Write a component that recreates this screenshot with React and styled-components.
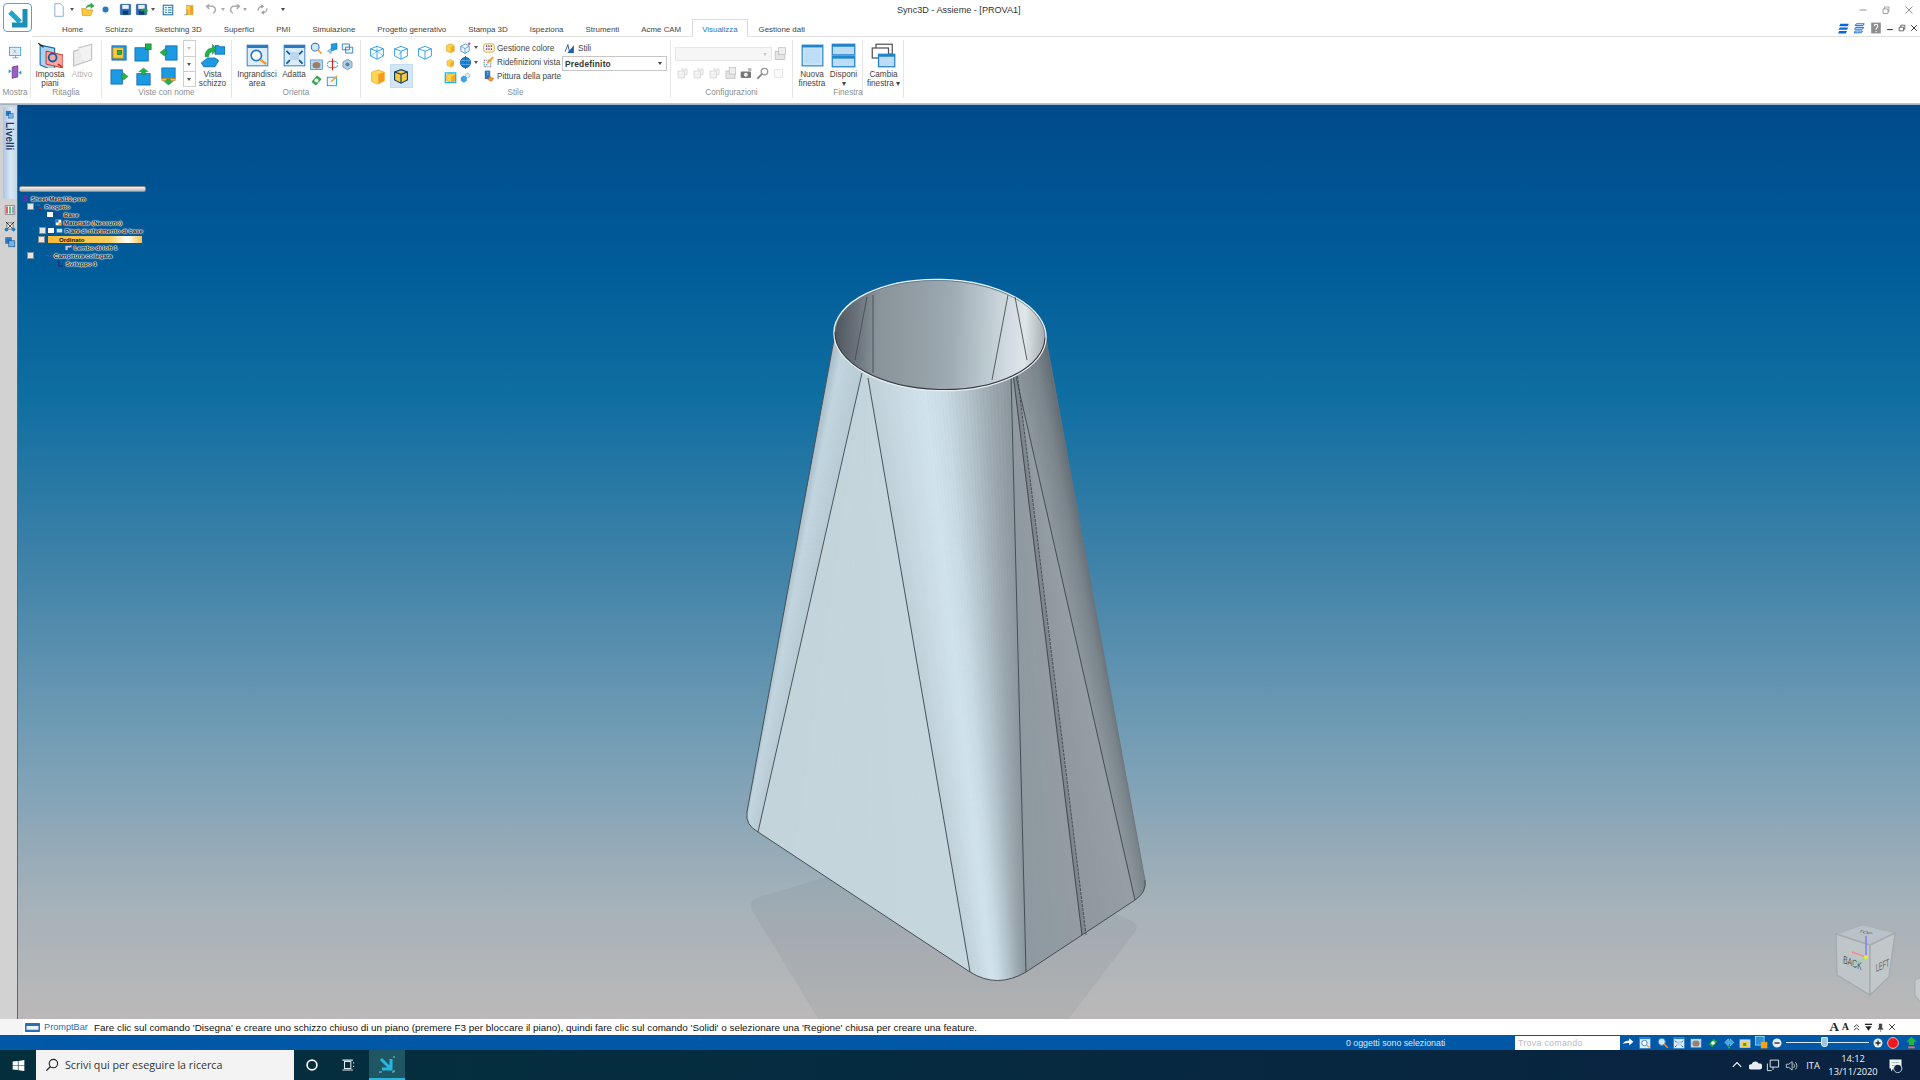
import React from "react";
import styled, { createGlobalStyle } from "styled-components";

const Global = createGlobalStyle`
  html, body { margin: 0; padding: 0; background: #fff; }
  body { font-family: "Liberation Sans", Arial, sans-serif; overflow: hidden; }
`;

const Page = styled.div`
  width: 1920px;
  height: 1080px;
  display: flex;
  flex-direction: column;
  overflow: hidden;
`;

const Header = styled.header`
  flex: none;
  background: #fff;
  height: 103px;
  display: flex;
  flex-direction: column;
`;
const TopRows = styled.div`
  display: flex;
  height: 37px;
  flex: none;
`;
const LogoBox = styled.div`
  width: 27px;
  height: 27px;
  margin: 3px 0 0 3px;
  border: 1px solid #4fa6d2;
  border-radius: 4px;
  flex: none;
`;
const TopStack = styled.div`
  flex: 1;
  display: flex;
  flex-direction: column;
  min-width: 0;
`;
const TitleRow = styled.div`
  height: 19px;
  flex: none;
  display: flex;
  align-items: center;
  padding-left: 20px;
`;
const Slot = styled.div`
  width: ${(p) => p.$w}px;
  height: 16px;
  flex: none;
  display: flex;
  align-items: center;
  justify-content: center;
`;
const Caret = styled.span`
  display: block;
  width: 0;
  height: 0;
  border-left: 2px solid transparent;
  border-right: 2px solid transparent;
  border-top: 3px solid ${(p) => p.$c || "#555"};
`;
const Title = styled.div`
  margin-left: 608px;
  font-size: 9.1px;
  color: #333;
  white-space: nowrap;
`;
const WinControls = styled.div`
  margin-left: auto;
  display: flex;
  align-items: center;
  gap: 13px;
  padding-right: 6px;
`;
const TabRow = styled.nav`
  height: 18px;
  flex: none;
  box-sizing: border-box;
  display: flex;
  align-items: stretch;
  padding-left: 19px;
  border-bottom: 1px solid #e1e1e1;
`;
const Tab = styled.div`
  padding: 0 ${(p) => p.$pad || 11}px;
  font-size: 7.9px;
  line-height: 21px;
  white-space: nowrap;
  color: ${(p) => (p.$active ? "#1f74b8" : "#444")};
  ${(p) =>
    p.$active &&
    `box-sizing:border-box;background:#fff;border:1px solid #dcdcdc;border-bottom:1px solid #fff;height:18px;line-height:20px;`}
`;
const TabTools = styled.div`
  margin-left: auto;
  display: flex;
  align-items: center;
  gap: 4px;
  padding-right: 2px;
`;

const Ribbon = styled.div`
  flex: none;
  height: 58px;
  display: flex;
  padding-top: 3px;
`;
const Group = styled.section`
  flex: none;
  box-sizing: border-box;
  width: ${(p) => p.$w}px;
  height: 58px;
  display: flex;
  flex-direction: column;
  border-right: 1px solid #e6e6e6;
`;
const GroupBody = styled.div`
  flex: none;
  height: 46px;
  display: flex;
  padding-left: ${(p) => p.$pl || 0}px;
`;
const GroupLabel = styled.div`
  flex: none;
  height: 12px;
  line-height: 14px;
  font-size: 8.2px;
  text-align: center;
  color: #8a8f94;
  white-space: nowrap;
`;
const IconStack = styled.div`
  width: 100%;
  display: flex;
  flex-direction: column;
  align-items: center;
  gap: 5px;
  padding-top: 5px;
`;
const BigButton = styled.div`
  flex: none;
  width: ${(p) => p.$w}px;
  margin-left: ${(p) => p.$ml || 0}px;
  display: flex;
  flex-direction: column;
  align-items: center;
`;
const BigIcon = styled.div`
  height: 30px;
  flex: none;
  display: flex;
  align-items: center;
  justify-content: center;
`;
const BigText = styled.div`
  font-size: 8.2px;
  line-height: 9px;
  text-align: center;
  white-space: nowrap;
  color: ${(p) => (p.$off ? "#b4b4b4" : "#444")};
`;
const IconGrid = styled.div`
  flex: none;
  display: grid;
  grid-template-columns: ${(p) => p.$cols};
  grid-auto-rows: ${(p) => p.$row}px;
  margin-left: ${(p) => p.$ml || 0}px;
  justify-items: center;
  align-items: center;
`;
const Picked = styled.div`
  width: 23px;
  height: 24px;
  background: #d3e6f6;
  border: 1px solid #c3dcf2;
  box-sizing: border-box;
  display: flex;
  align-items: center;
  justify-content: center;
`;
const Spinner = styled.div`
  flex: none;
  width: 13px;
  margin: 0 0 0 2px;
  height: 47px;
  border: 1px solid #cfcfcf;
  box-sizing: border-box;
  display: grid;
  grid-template-rows: 1fr 1fr 1fr;
`;
const SpinCell = styled.div`
  display: flex;
  align-items: center;
  justify-content: center;
  border-top: ${(p) => (p.$first ? "none" : "1px solid #cfcfcf")};
`;
const CmdList = styled.div`
  flex: none;
  width: 79px;
  margin-left: 3px;
  padding-top: 1px;
  display: flex;
  flex-direction: column;
`;
const Cmd = styled.div`
  height: 14px;
  flex: none;
  display: flex;
  align-items: center;
  gap: 2px;
  font-size: 8.2px;
  color: #444;
  white-space: nowrap;
`;
const StyleCol = styled.div`
  flex: none;
  width: 105px;
  padding-top: 1px;
  display: flex;
  flex-direction: column;
  gap: 1px;
`;
const Combo = styled.div`
  box-sizing: border-box;
  width: ${(p) => p.$w}px;
  height: ${(p) => p.$h}px;
  background: ${(p) => (p.$off ? "#f6f6f6" : "#fff")};
  border: 1px solid ${(p) => (p.$off ? "#e8e8e8" : "#c6c6c6")};
  display: flex;
  align-items: center;
  justify-content: space-between;
  padding: 0 4px 0 2px;
  font-size: 8.4px;
  font-weight: bold;
  color: #333;
  letter-spacing: 0.2px;
`;
const ConfigCol = styled.div`
  display: flex;
  flex-direction: column;
  padding: 7px 0 0 4px;
`;
const ConfigTop = styled.div`
  display: flex;
  align-items: center;
  gap: 1px;
`;
const ConfigIcons = styled.div`
  display: flex;
  gap: 3px;
  margin: 6px 0 0 1px;
`;
const SubSep = styled.div`
  flex: none;
  width: 1px;
  height: 56px;
  background: #e6e6e6;
  margin: 0 0 0 6px;
`;
const HeaderEdge = styled.div`
  flex: none;
  height: 2px;
  background: linear-gradient(180deg, #c8ced4, #93a9bf);
`;

const Main = styled.main`
  flex: 1;
  display: flex;
  min-height: 0;
`;
const Rail = styled.aside`
  flex: none;
  width: 18px;
  background: #d2d2d2;
  border-right: 1px solid #5c6870;
  box-sizing: border-box;
  display: flex;
  flex-direction: column;
  align-items: center;
  padding: 2px 0 0 2px;
`;
const RailTab = styled.div`
  width: 14px;
  flex: none;
  height: 92px;
  border-radius: 2px;
  background: linear-gradient(90deg, #a9c4e4, #dbe7f5 55%, #c2d6ec);
  display: flex;
  flex-direction: column;
  align-items: center;
  gap: 3px;
  padding-top: 3px;
  box-sizing: border-box;
`;
const RailText = styled.span`
  writing-mode: vertical-rl;
  font-size: 10px;
  font-weight: bold;
  color: #1d3f6e;
`;
const RailIcons = styled.div`
  display: flex;
  flex-direction: column;
  gap: 4px;
  margin-top: 5px;
`;
const Viewport = styled.div`
  position: relative;
  flex: 1;
  overflow: hidden;
  background: linear-gradient(
    180deg,
    #004a8b 0%,
    #005c99 17%,
    #0f6ea1 32%,
    #3f82a8 50%,
    #7aa0b6 72%,
    #a5b1b9 87%,
    #bbb9b8 100%
  );
`;
const Scene = styled.svg`
  position: absolute;
  left: 0;
  top: 0;
`;
const TreePanel = styled.div`
  position: absolute;
  left: 1px;
  top: 81px;
  width: 127px;
`;
const TreeGrip = styled.div`
  height: 4px;
  border-radius: 2px;
  background: linear-gradient(180deg, #f4f4f4, #b8b8b8);
  border: 0.5px solid #8b8b8b;
  margin-bottom: 2px;
`;
const TreeRow = styled.div`
  height: 8.2px;
  display: flex;
  align-items: center;
  gap: 2px;
  padding-left: ${(p) => p.$in}px;
  font-size: 6.1px;
  font-weight: bold;
  color: #111;
  white-space: nowrap;
  text-shadow: 0 0 1px #fff, 0 0 1px #fff, 0 0 1px #fff, 0 0 2px #fff, 0 0 2px #fff;
`;
const Expander = styled.span`
  flex: none;
  width: 5px;
  height: 5px;
  background: #e6e6e6;
  border: 0.5px solid #8d8d8d;
`;
const TreeCheck = styled.span`
  flex: none;
  width: 6px;
  height: 5px;
  background: ${(p) => (p.$blank ? "transparent" : "#fff")};
`;
const Highlight = styled.span`
  flex: none;
  width: 94px;
  height: 7px;
  margin-left: 1px;
  padding-left: 11px;
  box-sizing: border-box;
  line-height: 7px;
  color: #111;
  text-shadow: none;
  background: linear-gradient(90deg, #f6b93a, #fbcf5e 65%, #fff 85%, #f6c14a);
`;

const PromptRow = styled.div`
  flex: none;
  height: 16px;
  display: flex;
  align-items: center;
  background: #fff;
`;
const PromptGrip = styled.div`
  width: 23px;
  height: 100%;
  background: #f5f5f5;
  flex: none;
`;
const PromptName = styled.div`
  display: flex;
  align-items: center;
  gap: 4px;
  margin-left: 2px;
  font-size: 9.2px;
  color: #2a6fb2;
  width: 69px;
  flex: none;
`;
const PromptText = styled.div`
  font-size: 9.9px;
  color: #111;
  white-space: nowrap;
`;
const PromptTools = styled.div`
  margin-left: auto;
  display: flex;
  align-items: center;
  gap: 3px;
  padding-right: 24px;
`;
const BigA = styled.span`
  font-family: "Liberation Serif", serif;
  font-weight: bold;
  font-size: ${(p) => p.$s}px;
  line-height: 12px;
  color: #222;
`;

const StatusBar = styled.div`
  flex: none;
  height: 15px;
  background: #0058a6;
  display: flex;
  align-items: center;
  color: #dce9f5;
  font-size: 8.8px;
`;
const StatusText = styled.div`
  margin-left: 1346px;
  width: 169px;
  flex: none;
`;
const FindBox = styled.div`
  flex: none;
  width: 105px;
  height: 14px;
  background: #fff;
  color: #b7bcc1;
  font-size: 8.8px;
  line-height: 14px;
  padding-left: 3px;
  box-sizing: border-box;
  letter-spacing: 0.3px;
`;
const StatusIcons = styled.div`
  display: flex;
  align-items: center;
`;
const ZoomSlider = styled.div`
  position: relative;
  width: 83px;
  height: 1px;
  margin: 0 3px;
  background: #dbe7f2;
`;
const ZoomThumb = styled.span`
  position: absolute;
  left: 35px;
  top: -5px;
  width: 7px;
  height: 10px;
  background: #9fc3e3;
  border: 1px solid #dfeaf4;
  box-sizing: border-box;
  border-radius: 1px 1px 3px 3px;
`;

const Taskbar = styled.footer`
  flex: none;
  height: 30px;
  display: flex;
  align-items: stretch;
  background: linear-gradient(90deg, #032f3c, #052c40 40%, #0a2240);
  color: #f0f4f6;
`;
const StartButton = styled.div`
  width: 36px;
  flex: none;
  display: flex;
  align-items: center;
  justify-content: center;
`;
const SearchBox = styled.div`
  flex: none;
  width: 258px;
  background: #f3f3f3;
  color: #333;
  display: flex;
  align-items: center;
  gap: 6px;
  padding-left: 9px;
  box-sizing: border-box;
  font-family: "Open Sans", sans-serif;
  font-size: 10.7px;
`;
const TaskSlot = styled.div`
  flex: none;
  width: ${(p) => p.$w}px;
  margin-left: ${(p) => p.$ml || 0}px;
  display: flex;
  align-items: center;
  justify-content: center;
  box-sizing: border-box;
  ${(p) => p.$active && `background:#1f5663;border-bottom:2px solid #2fb4dc;`}
`;
const Tray = styled.div`
  margin-left: auto;
  display: flex;
  align-items: center;
  padding-right: 10px;
  font-family: "Open Sans", sans-serif;
`;
const TrayText = styled.div`
  font-size: 9.3px;
  width: ${(p) => p.$w}px;
  text-align: center;
  line-height: 13px;
`;

/* ---- icons, all drawn in a 20x20 box ---- */
const B = "#1c9ae4";
const BD = "#0c62a8";
const Y = "#ffc93c";
const O = "#f39b1f";
const G = "#23b24a";
const box = (x, y, w, h, f = B, s = BD) => <rect x={x} y={y} width={w} height={h} fill={f} stroke={s} strokeWidth=".8" />;
const arrow = (d, c = G) => <path d={d} fill={c} stroke="#127a30" strokeWidth=".4" />;
const cube = (f = "#ffd24a", s = "#c98a10") => (
  <>
    <path d="M4 6l7-3 6 3v9l-6 3-7-3z" fill={f} stroke={s} strokeWidth=".8" />
    <path d="M11 9v9l6-3V6z" fill={O} opacity=".75" />
  </>
);
const wire = (extra) => (
  <g fill="none" stroke={B} strokeWidth="1.1">
    <path d="M2 6l8-3 8 3v9l-8 4-8-4z" />
    <path d="M2 6l8 3 8-3M10 9v10" />
    {extra}
  </g>
);
const flop = (
  <>
    <rect x="2" y="2" width="16" height="16" rx="1" fill="#2f6db4" stroke="#17477f" strokeWidth=".8" />
    <rect x="5" y="3" width="10" height="6" fill="#e8f0f8" />
    <rect x="6" y="12" width="8" height="6" fill="#0f3b70" />
  </>
);
const greyArrow = (d) => <path d={d} fill="none" stroke="#a9adb1" strokeWidth="2.4" />;
const frame = (inner) => (
  <>
    <rect x="1" y="1" width="18" height="18" fill="#dcecf9" stroke="#2a78c0" strokeWidth=".8" />
    <rect x="1" y="1" width="18" height="2.5" fill="#2a78c0" />
    {inner}
  </>
);
const offPage = <path d="M3 6h10v11H3zM8 3h9v9h-4" fill="#f1f1f1" stroke="#cfcfcf" strokeWidth="1" />;

const GLYPHS = {
  doc: <path d="M4 1h8l4 4v14H4z" fill="#fff" stroke="#5a8ec6" />,
  open: (
    <>
      <path d="M1 8h6l2 2h8l-3 8H2z" fill={Y} stroke="#b9851a" strokeWidth=".8" />
      {arrow("M7 7c1-4 4-5 7-5V0l5 4-5 4V5c-3 0-5 1-7 2z")}
    </>
  ),
  ball: <><circle cx="11" cy="9" r="6" fill="#2a78c0" /><path d="M3 15l8 2 6-2-6 3z" fill="#bcd" /></>,
  save: flop,
  saveAll: <>{flop}{arrow("M9 13a5 5 0 019-2h2l-3 5-4-5h2a3 3 0 00-4 2z")}</>,
  list: <><rect x="2" y="2" width="16" height="16" fill="#dff" stroke="#1b5d92" strokeWidth="1.6" /><path d="M5 6h3M10 6h6M5 10h3M10 10h6M5 14h3M10 14h6" stroke="#1b5d92" strokeWidth="1.4" /></>,
  books: <><rect x="6" y="2" width="6" height="16" fill={Y} stroke="#b9851a" strokeWidth=".6" /><rect x="12" y="2" width="5" height="16" fill={O} /><path d="M2 18h5V9" stroke="#777" fill="none" /></>,
  undo: greyArrow("M14 16a6 6 0 000-11H5M8 2L4 5l4 4"),
  redo: greyArrow("M6 16a6 6 0 010-11h9M12 2l4 3-4 4"),
  swap: <path d="M3 12c0-5 4-7 8-7M8 3l3 2-3 3M17 8c0 5-4 7-8 7M12 17l-3-2 3-3" fill="none" stroke="#9a9ea3" strokeWidth="1.8" />,
  help: <><rect x="2" y="1" width="16" height="18" fill="#8d8d8d" /><path d="M7 7c0-4 6-4 6 0 0 3-3 2-3 6M10 15v2" stroke="#fff" strokeWidth="1.8" fill="none" /></>,
  stackA: <path d="M4 3h14l-2 4H2zM3 9h14l-2 4H1zM2 15h13l-2 4H0z" fill="#0b66d8" />,
  stackB: <path d="M4 3h13l-2 3H2zM3 9h13l-2 3H1zM2 15h12l-2 3H0z" fill="#fff" stroke="#0b66d8" strokeWidth="1.6" />,
  min: <path d="M3 10h14" stroke="#777" strokeWidth="1.6" />,
  restore: <path d="M4 8h10v9H4zM7 8V4h9v9h-2" fill="none" stroke="#777" strokeWidth="1.3" />,
  close: <path d="M3 3l14 14M17 3L3 17" stroke="#666" strokeWidth="1.4" />,
  minD: <path d="M3 14h14" stroke="#222" strokeWidth="2.4" />,
  restoreD: <path d="M3 8h11v9H3zM7 8V3h10v10h-3" fill="none" stroke="#222" strokeWidth="1.6" />,
  closeD: <path d="M3 3l14 14M17 3L3 17" stroke="#222" strokeWidth="2.2" />,
  screen: <><rect x="2" y="3" width="15" height="11" fill="#dcecf9" stroke={B} /><path d="M6 17h8M10 14v3" stroke={B} /><path d="M7 6l4 5M11 6l-4 5" stroke="#9aa" /></>,
  clip: <><path d="M6 3l8-2v16l-8 2z" fill="#9b5fc0" stroke="#5a2f88" /><path d="M1 6l4 3-4 3zM19 8l-4 3 4 3z" fill={B} /></>,
  planes: (
    <>
      <path d="M3 3l14 3v22L3 22z" fill="#a9d4ef" stroke={BD} transform="scale(.8)" />
      <path d="M7 7l13 3v10L7 17z" fill="#f6a7a0" stroke="#c8281e" strokeWidth=".7" />
      <path d="M1 1l4 3" stroke="#222" strokeWidth="1" />
      <path d="M19 19l-3-2" stroke="#c8281e" strokeWidth="1.2" />
      <circle cx="12" cy="12" r="3" fill="none" stroke="#0b5fa5" strokeWidth="1.4" />
    </>
  ),
  planesOff: <><path d="M3 7l9-3v12l-9 3z" fill="#ececec" stroke="#c3c3c3" /><path d="M7 4l11-3v13l-6 2" fill="#f3f3f3" stroke="#c3c3c3" /></>,
  vYellow: <>{box(2, 3, 15, 15)}{box(3, 5, 11, 11, Y, "#b9851a")}{box(8, 8, 4, 4, G, "#127a30")}</>,
  vCorner: <>{box(1, 5, 14, 14)}{box(12, 1, 6, 6, G, "#127a30")}</>,
  vLeft: <>{box(7, 3, 12, 15)}{arrow("M1 10l5-4v2h2v4H6v2z")}</>,
  vRight: <>{box(1, 3, 12, 15)}{arrow("M19 10l-5-4v2h-2v4h2v2z")}</>,
  vTop: <>{box(3, 7, 14, 12)}{arrow("M10 1l-5 4h3v3h4V5h3z")}</>,
  vBottom: <>{box(3, 1, 14, 11)}{box(3, 12, 14, 2, Y, "#b9851a")}{arrow("M10 19l-5-4h3v-2h4v2h3z")}</>,
  vista: (
    <>
      <path d="M1 16l5-4h6l3 2-3 5H3z" fill={B} stroke={BD} strokeWidth=".6" />
      <path d="M12 2h3l1 1h4v6h-8z" fill={B} stroke={BD} strokeWidth=".6" />
      {arrow("M4 11c0-4 2-7 6-7V1l3 4-3 4V7c-2 0-3 2-3 4z")}
    </>
  ),
  zoomArea: frame(<><circle cx="9" cy="10" r="4.5" fill="#fff" stroke="#2a78c0" strokeWidth="1.4" /><path d="M12.5 13.5l5 4" stroke={O} strokeWidth="2" /></>),
  fit: frame(<><rect x="6" y="7" width="8" height="7" fill="#bcd8f0" /><path d="M3 6l3 3M17 6l-3 3M3 17l3-3M17 17l-3-3" stroke="#0c62a8" strokeWidth="1.6" /></>),
  zoomS: <><circle cx="8" cy="8" r="6" fill="#cfe6f8" stroke="#2a78c0" strokeWidth="1.6" /><path d="M12 12l6 6" stroke={O} strokeWidth="2.4" /></>,
  panCube: <><path d="M8 3l9-1v9l-9 3z" fill={B} stroke={BD} strokeWidth=".7" /><path d="M2 14l6-4v8z" fill="#9ad0f2" stroke={BD} strokeWidth=".5" /></>,
  windows: <path d="M2 3h11v9H2zM7 8h11v9H7z" fill="#eef6fc" stroke="#1b6cb0" strokeWidth="1.2" />,
  eye: <>{box(1, 3, 18, 15, "#bcd8f0")}<ellipse cx="10" cy="11" rx="6" ry="5" fill="#9a7f6a" /></>,
  spinAxis: <><path d="M2 9a8 4 0 0116 0M18 11a8 4 0 01-16 0" fill="none" stroke={B} strokeWidth="1.5" /><path d="M10 1v18" stroke="#d22" strokeWidth="1.8" /></>,
  gear: <><path d="M10 2l7 4v8l-7 4-7-4V6z" fill="#a9d4ef" stroke="#777" /><circle cx="10" cy="10" r="3" fill="#6b7a86" /></>,
  greenTurn: <><path d="M3 12l8-9 6 5-8 9z" fill={G} stroke="#127a30" /><circle cx="10" cy="10" r="3" fill="#fff" /></>,
  rename: <><rect x="2" y="5" width="14" height="13" fill="#eef6fc" stroke={B} strokeWidth="1.4" /><path d="M8 12l9-9" stroke={O} strokeWidth="2" /></>,
  wireA: wire(<path d="M10 3v6M2 15l8-6 8 6" strokeWidth=".7" />),
  wireB: wire(<path d="M7 14l3-4" strokeWidth=".7" />),
  wireC: <path d="M2 6l8-3 8 3v9l-8 4-8-4zM2 6l8 3 8-3M10 9v10" fill="none" stroke={B} strokeWidth="1.1" />,
  solid: <><path d="M3 5l8-3 7 3v10l-8 4-7-3z" fill="#ffd553" stroke="#e1a21a" strokeWidth=".7" /><path d="M11 7v12l7-4V5z" fill={O} /></>,
  solidEdge: <><path d="M2 5l8-3 8 3v10l-8 4-8-4z" fill={Y} stroke="#10446f" strokeWidth="1.5" /><path d="M2 5l8 3 8-3M10 8v11" fill="none" stroke="#10446f" strokeWidth="1.5" /></>,
  cubeA: cube(),
  cubeB: <><path d="M3 7l8-4 6 4v8l-7 4-7-4z" fill="#eef6fc" stroke="#2a78c0" strokeWidth="1.2" /><path d="M3 7l7 4 7-4M10 11v8" fill="none" stroke="#2a78c0" /><circle cx="17" cy="3" r="2" fill="#d23ab0" /></>,
  globe: <><circle cx="10" cy="10" r="8" fill="#1a7fce" stroke="#0c4f8a" /><path d="M10 0v20" stroke="#e02020" strokeWidth="1.6" /><path d="M3 7h14M3 13h14" stroke="#7cc0ef" /></>,
  cubeBlue: <>{cube()}<path d="M2 3h16v15H2z" fill="none" stroke="#17b7ee" strokeWidth="2" /></>,
  cubes: <><path d="M2 10l5-3 5 3v6l-5 3-5-3z" fill="#35a7ea" stroke={BD} strokeWidth=".5" /><path d="M10 4l4-2 4 2v5l-4 2-4-2z" fill="#d9eefb" stroke={BD} strokeWidth=".5" /></>,
  palette: <><rect x="1" y="3" width="18" height="14" rx="4" fill="#fff3c9" stroke="#b9851a" /><path d="M5 7h2M9 7h2M13 7h2M5 12h2M9 12h2M13 12h2" stroke="#6a45c8" strokeWidth="3" /></>,
  override: <><path d="M2 7h11v11H2z" fill="#fff" stroke="#222" strokeDasharray="2 1" /><path d="M7 12l10-10" stroke={O} strokeWidth="3" /><path d="M5 13l3 2-3 1z" fill={B} /></>,
  paint: <><rect x="3" y="1" width="9" height="14" fill="#2a78c0" /><path d="M7 4h2M7 7h2" stroke="#fff" /><path d="M11 11l7 3-4 5-6-3z" fill={O} stroke="#c8281e" strokeWidth=".6" /></>,
  styleA: <><path d="M2 16L7 3l3 13" fill="none" stroke="#1b3f7a" strokeWidth="1.5" /><path d="M18 4v14H6z" fill="#1b5fb0" /></>,
  cfgGrp: offPage,
  cfgCam: <><rect x="1" y="7" width="16" height="10" rx="2" fill="#777" /><circle cx="9" cy="12" r="3" fill="#eee" /><circle cx="15" cy="4" r="3" fill="#bbb" /></>,
  cfgKey: <><circle cx="13" cy="7" r="5" fill="none" stroke="#999" strokeWidth="2" /><path d="M9 11l-7 7" stroke="#888" strokeWidth="3" /></>,
  cfgBox: <rect x="4" y="4" width="12" height="12" fill="#fafafa" stroke="#dcdcdc" />,
  cfgSave: <><rect x="3" y="6" width="14" height="12" fill="#e4e4e4" stroke="#bbb" /><rect x="8" y="1" width="10" height="10" fill="#eee" stroke="#bbb" /></>,
  winOne: <><rect x="1" y="1" width="18" height="18" fill="#cfe6f8" stroke="#1f83cc" /><rect x="1" y="1" width="18" height="2" fill="#1f83cc" /><rect x="3" y="4" width="14" height="13" fill="#bddcf5" /></>,
  winTwo: <><rect x="1" y="1" width="18" height="8.5" fill="#bddcf5" stroke="#1f83cc" /><rect x="1" y="1" width="18" height="2" fill="#1f83cc" /><rect x="1" y="10.5" width="18" height="8.5" fill="#bddcf5" stroke="#1f83cc" /><rect x="1" y="10.5" width="18" height="2" fill="#1f83cc" /></>,
  winSwap: <><rect x="4" y="1" width="13" height="8" fill="#fff" stroke="#555" /><rect x="1" y="4" width="13" height="8" fill="#fff" stroke="#555" /><rect x="6" y="9" width="13" height="10" fill="#bddcf5" stroke="#1f83cc" /><rect x="6" y="9" width="13" height="2" fill="#1f83cc" /></>,
  railA: <><rect x="2" y="3" width="16" height="14" fill="#fff" stroke="#555" /><path d="M5 4v12" stroke="#e23" strokeWidth="2.5" /><path d="M10 4v12" stroke="#2b2" strokeWidth="2.5" /><path d="M15 4v12" stroke="#68c" strokeWidth="2.5" /></>,
  railB: <><path d="M5 5h10v10H5z" fill="#fff" stroke="#222" /><path d="M3 3l14 14M17 3L3 17" stroke="#222" strokeWidth="1.4" /><circle cx="4" cy="16" r="3" fill="#2a78c0" /><circle cx="16" cy="16" r="3" fill="#2a78c0" /></>,
  railC: <><rect x="2" y="2" width="11" height="11" fill="#2a78c0" /><rect x="8" y="8" width="10" height="10" fill="#6fb6ea" stroke="#114d88" /></>,
  tS: <path d="M16 5c-3-3-11-3-11 2 0 5 11 2 11 7 0 5-9 4-12 1" fill="none" stroke="#6b2fb5" strokeWidth="3.4" />,
  tProject: <><path d="M3 4h8v4H3z" fill="#2a78c0" /><path d="M9 12h8v5H9z" fill="#e02020" /><path d="M7 8v6h3" stroke="#444" fill="none" /></>,
  tLine: <path d="M3 3l14 13" stroke="#5a2fb5" strokeWidth="2" />,
  tMat: <><rect x="2" y="2" width="16" height="16" fill="#fff" /><rect x="2" y="2" width="8" height="8" fill="#2a78c0" /><rect x="10" y="10" width="8" height="8" fill="#f3a51f" /></>,
  tPlane: <rect x="2" y="5" width="16" height="11" fill="#cfe2f4" stroke="#2a78c0" />,
  tLoft: <path d="M2 17V6h12l4-2v5H7v8z" fill="#cbb7e8" stroke="#e8e8f8" />,
  tRed: <><path d="M10 1v18M3 10h14" stroke="#d81f1f" strokeWidth="2.4" /><circle cx="10" cy="10" r="3" fill="#1a3fae" /></>,
  tWave: <path d="M2 12c3-4 5-4 8-1s5 2 8-2" stroke="#2a5fc0" strokeWidth="3" fill="none" />,
  tL: <path d="M5 2v15h12" stroke="#20367c" strokeWidth="4" fill="none" />,
  prompt: <><rect x="0" y="4" width="20" height="12" rx="1" fill="#2a6fb2" /><rect x="2" y="8" width="16" height="5" fill="#eaf2fa" /></>,
  chevUp: <path d="M4 9l6-5 6 5M4 16l6-5 6 5" fill="none" stroke="#333" strokeWidth="2" />,
  arrowDn: <><path d="M2 3h16" stroke="#222" strokeWidth="3" /><path d="M3 7h14l-7 10z" fill="#222" /></>,
  pin: <path d="M7 2h6v9l3 3H4l3-3zM10 14v6" fill="#444" stroke="#222" />,
  jump: <path d="M1 12c3-5 7-6 11-6V2l7 6-7 6v-4c-4 0-8 0-11 2z" fill="#fff" />,
  plus: <><circle cx="10" cy="10" r="9" fill="#e8f0f6" /><path d="M5 10h10M10 5v10" stroke="#222" strokeWidth="2.6" /></>,
  minus: <><circle cx="10" cy="10" r="9" fill="#e8f0f6" /><path d="M5 10h10" stroke="#222" strokeWidth="2.6" /></>,
  record: <circle cx="10" cy="10" r="9" fill="#f2181c" stroke="#f6d0c8" strokeWidth="1.4" />,
  upGreen: <><path d="M10 1l8 8h-4v5H6V9H2z" fill="#1eb83f" /><path d="M5 16h10v3H5z" fill="#ef6b5d" /></>,
  moveS: <><path d="M3 9l6-6v4h3V3l6 6-6 6v-4H9v4z" fill="#35a8ea" stroke="#fff" strokeWidth=".6" /><path d="M7 16l3 4 3-4z" fill="#1eb83f" /></>,
  folderS: <><rect x="1" y="4" width="18" height="14" fill="#bcd8f0" /><rect x="4" y="8" width="12" height="9" fill={Y} /><rect x="7" y="10" width="5" height="5" fill={G} /></>,
  squaresS: <><rect x="1" y="1" width="13" height="13" fill="#2a90dd" stroke="#bfe" /><rect x="9" y="9" width="10" height="10" fill="#f8a11b" /></>,
  win: <path d="M1 4l8-1v6.500H1zM10 3l9-1.300V9.500h-9zM1 10.500h8V17l-8-1zM10 10.500h9v8l-9-1.300z" fill="#fff" />,
  search: <><circle cx="12" cy="8" r="6" fill="none" stroke="#222" strokeWidth="1.6" /><path d="M7.500 12.500L2 18" stroke="#222" strokeWidth="1.800" /></>,
  cortana: <circle cx="10" cy="10" r="7" fill="none" stroke="#fff" strokeWidth="2.400" />,
  taskview: <path d="M5 5h9v10H5zM2 3h15M2 17h15M18 6v2M18 11v2" fill="none" stroke="#dfe8ec" strokeWidth="1.500" />,
  app: <><path d="M4 5l10 10M14 5v10H5" fill="none" stroke="#28b7e0" strokeWidth="3" /><path d="M17 2v2M2 18h3M17 16v2h-2" stroke="#7cc6db" fill="none" /></>,
  up: <path d="M3 13l7-7 7 7" fill="none" stroke="#fff" strokeWidth="1.800" />,
  cloud: <path d="M3 16a4 4 0 011-8 6 6 0 0111-1 4.500 4.500 0 012 9z" fill="#e8eef2" />,
  net: <path d="M6 3h12v10H6zM2 8v10M2 18h6M10 13v4" fill="none" stroke="#e8eef2" strokeWidth="1.300" />,
  sound: <path d="M2 8h4l5-4v13l-5-4H2zM13 7c2 2 2 5 0 7M16 5c3 3 3 8 0 11" fill="none" stroke="#dfe6ea" strokeWidth="1.200" />,
  notice: <><path d="M2 2h16v12H7l-3 4v-4H2z" fill="#f3f6f8" /><path d="M5 6h10M5 10h10" stroke="#8ba" /><circle cx="13" cy="14" r="5.500" fill="#0b2240" stroke="#fff" /></>,
};

const Ic = ({ n, s = 16 }) => (
  <svg width={s} height={s} viewBox="0 0 20 20" style={{ display: "block", flex: "none" }}>
    {GLYPHS[n]}
  </svg>
);

/* ---- model ---- */
const hex = (c) => [1, 3, 5].map((i) => parseInt(c.slice(i, i + 2), 16));
const colorAt = (stops, t) => {
  let i = 0;
  while (i < stops.length - 2 && t > stops[i + 1][0]) i++;
  const [t0, c0] = stops[i];
  const [t1, c1] = stops[i + 1];
  const k = Math.min(1, Math.max(0, (t - t0) / (t1 - t0)));
  const a = hex(c0);
  const b = hex(c1);
  return `rgb(${a.map((v, j) => Math.round(v + (b[j] - v) * k)).join(",")})`;
};
const at = (l, t) => [l[0][0] + (l[1][0] - l[0][0]) * t, l[0][1] + (l[1][1] - l[0][1]) * t];

// Conical shading: thin quads between two rulings, so the shade follows the taper
const Strips = ({ a, b, stops, n = 30 }) => {
  const items = [];
  for (let i = 0; i < n; i++) {
    const t0 = i / n;
    const t1 = (i + 1) / n;
    const la = [at([a[0], b[0]], t0), at([a[1], b[1]], t0)];
    const lb = [at([a[0], b[0]], t1), at([a[1], b[1]], t1)];
    const pts = [at(la, -0.06), at(la, 1.08), at(lb, 1.08), at(lb, -0.06)].map((p) => p.join(",")).join(" ");
    const c = colorAt(stops, (t0 + t1) / 2);
    items.push(<polygon key={i} points={pts} fill={c} stroke={c} strokeWidth="1" />);
  }
  return <>{items}</>;
};

const L_LEFT = [[830, 335], [738, 832]];
const L1 = [[862, 373], [758, 832]];
const L2 = [[868, 378], [970, 972]];
const L3 = [[1011, 375], [1026, 972]];
const D1 = [[1013, 373], [1082, 935]];
const D2 = [[1017, 372], [1086, 935]];
const L4 = [[1015, 372], [1135, 900]];
const L_RIGHT = [[1052, 335], [1160, 900]];
const BODY = "M835 334L747 812Q745 825 758 832L970 972Q997 989 1026 972L1135 900Q1147 892 1145 880L1046 338Z";
const ledge = (l) => `M${l[0].join(" ")}L${l[1].join(" ")}`;

const ViewCube = () => (
  <g>
    <path d="M1836 934L1863 925L1895 933L1870 945Z" fill="#b8c2c8" stroke="#aab2b7" />
    <path d="M1836 934L1870 945L1870 995L1837 975Z" fill="#bfc6ca" stroke="#a4acb0" strokeWidth="1.4" />
    <path d="M1870 945L1895 933L1889 977L1870 995Z" fill="#c2c7ca" stroke="#a4acb0" strokeWidth="1.4" />
    <text transform="matrix(.62 .24 -.04 1 1843 963)" fontSize="11" fill="#50565a" fontFamily="Liberation Sans">BACK</text>
    <text transform="matrix(.5 -.22 .03 1 1876 972)" fontSize="11" fill="#5b6165" fontFamily="Liberation Sans">LEFT</text>
    <text transform="matrix(.9 .2 -.5 .4 1858 932)" fontSize="7" fill="#555" fontFamily="Liberation Sans">TOP</text>
    <path d="M1866 957V936" stroke="#7f7fe8" strokeWidth="1.5" />
    <path d="M1866 957L1852 952" stroke="#ef8f86" strokeWidth="1.5" />
    <path d="M1866 957L1853 966" stroke="#84e0a0" strokeWidth="1.5" />
    <circle cx="1866" cy="957" r="2" fill="#efe92a" />
    <path d="M1930 974L1915 980V995L1925 1008L1930 1006Z" fill="#c6cbce" stroke="#a6adb1" />
  </g>
);

const Model = () => (
  <Scene width="1902" height="914" viewBox="18 105 1902 914">
    <defs>
      <clipPath id="bodyClip"><path d={BODY} /></clipPath>
      <linearGradient id="inner" x1="835" x2="1046" y1="0" y2="0" gradientUnits="userSpaceOnUse">
        <stop offset="0" stopColor="#4f575d" />
        <stop offset=".1" stopColor="#69727a" />
        <stop offset=".2" stopColor="#89939a" />
        <stop offset=".38" stopColor="#929da4" />
        <stop offset=".55" stopColor="#9eabb3" />
        <stop offset=".68" stopColor="#b5c2c9" />
        <stop offset=".8" stopColor="#cdd8dd" />
        <stop offset=".9" stopColor="#dfe6e9" />
        <stop offset="1" stopColor="#a3abaf" />
      </linearGradient>
    </defs>
    <path
      d="M756 898L850 870L1110 912L1130 920Q1140 925 1135 932L1064 1025L822 1025L752 910Q748 902 756 898Z"
      fill="#5a646c"
      opacity=".09"
    />
    <g clipPath="url(#bodyClip)">
      <Strips a={L_LEFT} b={L1} n={16} stops={[[0, "#98afbd"], [0.4, "#c3d6df"], [1, "#b9cbd4"]]} />
      <Strips a={L1} b={L2} n={6} stops={[[0, "#c4d4db"], [1, "#c6d6dd"]]} />
      <Strips
        a={L2}
        b={L3}
        n={40}
        stops={[
          [0, "#c0d0d8"],
          [0.2, "#c9dae3"],
          [0.38, "#d1e3ed"],
          [0.52, "#c9dbe4"],
          [0.68, "#b6c5ce"],
          [0.85, "#9ea9b1"],
          [1, "#8b969d"],
        ]}
      />
      <Strips a={L3} b={D1} n={6} stops={[[0, "#8e99a1"], [1, "#939ca2"]]} />
      <Strips a={D1} b={D2} n={1} stops={[[0, "#7e878d"], [1, "#7e878d"]]} />
      <Strips a={D2} b={L4} n={6} stops={[[0, "#8e989e"], [1, "#969fa5"]]} />
      <Strips a={L4} b={L_RIGHT} n={18} stops={[[0, "#8e989e"], [0.55, "#7a848b"], [0.85, "#646d74"], [1, "#7b848a"]]} />
    </g>
    <g fill="none" stroke="#3c454b" strokeWidth=".9">
      <path d={ledge(L1)} />
      <path d={ledge(L2)} />
      <path d={ledge(L3)} />
      <path d={ledge(D1)} />
      <path d={ledge(D2)} strokeDasharray="3 1" />
      <path d={ledge(L4)} />
      <path d="M835 334L747 812Q745 825 758 832L970 972Q997 989 1026 972L1135 900Q1147 892 1145 880" stroke="#454e54" strokeWidth="1" />
      <path d="M1145 880L1046 338" stroke="#6d767c" strokeWidth=".7" />
    </g>
    <g transform="rotate(1.5 940 335)">
      <ellipse cx="940" cy="335" rx="105" ry="54.500" fill="url(#inner)" />
      <ellipse cx="940" cy="335" rx="106" ry="55.500" fill="none" stroke="#e9eef0" strokeWidth="1.600" />
      <path d="M835 335A105 54.500 0 001045 335" fill="none" stroke="#33393e" strokeWidth="1.100" />
      <path d="M835 335A105 54.500 0 011045 335" fill="none" stroke="#6b7379" strokeWidth=".6" />
    </g>
    <g fill="none" stroke="#474f55" strokeWidth=".9">
      <path d="M867 297L855 360M873 295L873 373M1008 295L992 380M1015 297L1027 360" />
    </g>
    <ViewCube />
  </Scene>
);

const TREE = [
  { in: 3, icon: "tS", text: "Sheet Metal10.psm" },
  { in: 8, box: true, icon: "tProject", text: "Progetto" },
  { in: 28, check: true, icon: "tLine", text: "Base" },
  { in: 28, blank: true, icon: "tMat", text: "Materiale (Nessuno)" },
  { in: 20, box: true, check: true, icon: "tPlane", text: "Piani di riferimento di base" },
  { in: 19, box: true, picked: "Ordinato" },
  { in: 46, icon: "tLoft", text: "Lembo di loft 1" },
  { in: 8, box: true, icon: "tRed", icon2: "tWave", text: "Campitura collegata" },
  { in: 38, icon: "tL", text: "Sviluppo 1" },
];

const TAB_NAMES = [
  "Home", "Schizzo", "Sketching 3D", "Superfici", "PMI", "Simulazione", "Progetto generativo",
  "Stampa 3D", "Ispeziona", "Strumenti", "Acme CAM",
];

const small = (names, s = 14) => names.map((n, i) => <Ic key={i} n={n} s={s} />);

export default function App() {
  return (
    <Page>
      <Global />
      <Header>
        <TopRows>
          <LogoBox>
            <svg width="27" height="27" viewBox="0 0 27 27">
              <path d="M6 8l10 10" stroke="#1ea3c9" strokeWidth="5" />
              <path d="M21 5v16H8" fill="none" stroke="#1c8fb8" strokeWidth="5" />
            </svg>
          </LogoBox>
          <TopStack>
            <TitleRow>
              <Slot $w={14}><Ic n="doc" s={14} /></Slot>
              <Slot $w={12}><Caret /></Slot>
              <Slot $w={3} />
              <Slot $w={14}><Ic n="open" s={14} /></Slot>
              <Slot $w={20}><Ic n="ball" s={10} /></Slot>
              <Slot $w={20}><Ic n="save" s={13} /></Slot>
              <Slot $w={12}><Ic n="saveAll" s={13} /></Slot>
              <Slot $w={12}><Caret /></Slot>
              <Slot $w={18}><Ic n="list" s={12} /></Slot>
              <Slot $w={24}><Ic n="books" s={12} /></Slot>
              <Slot $w={18}><Ic n="undo" s={13} /></Slot>
              <Slot $w={8}><Caret $c="#aaa" /></Slot>
              <Slot $w={16}><Ic n="redo" s={13} /></Slot>
              <Slot $w={4}><Caret $c="#aaa" /></Slot>
              <Slot $w={30}><Ic n="swap" s={13} /></Slot>
              <Slot $w={12}><Caret $c="#444" /></Slot>
              <Title>Sync3D - Assieme - [PROVA1]</Title>
              <WinControls>
                <Ic n="min" s={10} />
                <Ic n="restore" s={10} />
                <Ic n="close" s={10} />
              </WinControls>
            </TitleRow>
            <TabRow>
              {TAB_NAMES.map((t) => (
                <Tab key={t}>{t}</Tab>
              ))}
              <Tab $active $pad={9}>Visualizza</Tab>
              <Tab>Gestione dati</Tab>
              <TabTools>
                <Ic n="stackA" s={12} />
                <Ic n="stackB" s={12} />
                <Ic n="help" s={12} />
                <Ic n="minD" s={8} />
                <Ic n="restoreD" s={8} />
                <Ic n="closeD" s={8} />
              </TabTools>
            </TabRow>
          </TopStack>
        </TopRows>

        <Ribbon>
          <Group $w={31}>
            <GroupBody>
              <IconStack>
                <Ic n="screen" s={15} />
                <Ic n="clip" s={14} />
              </IconStack>
            </GroupBody>
            <GroupLabel>Mostra</GroupLabel>
          </Group>

          <Group $w={71}>
            <GroupBody $pl={4}>
              <BigButton $w={30}>
                <BigIcon><Ic n="planes" s={26} /></BigIcon>
                <BigText>Imposta<br />piani</BigText>
              </BigButton>
              <BigButton $w={30} $ml={2}>
                <BigIcon><Ic n="planesOff" s={24} /></BigIcon>
                <BigText $off>Attivo</BigText>
              </BigButton>
            </GroupBody>
            <GroupLabel>Ritaglia</GroupLabel>
          </Group>

          <Group $w={130}>
            <GroupBody $pl={5}>
              <IconGrid $cols="repeat(3, 24.5px)" $row={24}>
                {small(["vYellow", "vCorner", "vLeft", "vRight", "vTop", "vBottom"], 19)}
              </IconGrid>
              <Spinner>
                <SpinCell $first><Caret $c="#c4c4c4" /></SpinCell>
                <SpinCell><Caret /></SpinCell>
                <SpinCell><Caret /></SpinCell>
              </Spinner>
              <BigButton $w={34}>
                <BigIcon><Ic n="vista" s={25} /></BigIcon>
                <BigText>Vista<br />schizzo</BigText>
              </BigButton>
            </GroupBody>
            <GroupLabel>Viste con nome</GroupLabel>
          </Group>

          <Group $w={129}>
            <GroupBody $pl={2}>
              <BigButton $w={46}>
                <BigIcon><Ic n="zoomArea" s={23} /></BigIcon>
                <BigText>Ingrandisci<br />area</BigText>
              </BigButton>
              <BigButton $w={28}>
                <BigIcon><Ic n="fit" s={23} /></BigIcon>
                <BigText>Adatta</BigText>
              </BigButton>
              <IconGrid $cols="repeat(3, 15.5px)" $row={16} $ml={1}>
                {small(["zoomS", "panCube", "windows", "eye", "spinAxis", "gear", "greenTurn", "rename"], 13)}
              </IconGrid>
            </GroupBody>
            <GroupLabel>Orienta</GroupLabel>
          </Group>

          <Group $w={310}>
            <GroupBody $pl={4}>
              <IconGrid $cols="repeat(3, 24px)" $row={24}>
                <Ic n="wireA" s={16} />
                <Ic n="wireB" s={16} />
                <Ic n="wireC" s={16} />
                <Ic n="solid" s={17} />
                <Picked><Ic n="solidEdge" s={16} /></Picked>
              </IconGrid>
              <IconGrid $cols="16px 14px 8px" $row={15} $ml={5}>
                <Ic n="cubeA" s={12} /><Ic n="cubeB" s={12} /><Caret />
                <Ic n="cubeA" s={10} /><Ic n="globe" s={13} /><Caret />
                <Ic n="cubeBlue" s={13} /><Ic n="cubes" s={11} />
              </IconGrid>
              <CmdList>
                <Cmd><Ic n="palette" s={12} />Gestione colore</Cmd>
                <Cmd><Ic n="override" s={12} />Ridefinizioni vista</Cmd>
                <Cmd><Ic n="paint" s={12} />Pittura della parte</Cmd>
              </CmdList>
              <StyleCol>
                <Cmd><Slot $w={14}><Ic n="styleA" s={11} /></Slot>Stili</Cmd>
                <Combo $w={105} $h={15}>Predefinito<Caret $c="#444" /></Combo>
              </StyleCol>
            </GroupBody>
            <GroupLabel>Stile</GroupLabel>
          </Group>

          <Group $w={122}>
            <GroupBody>
              <ConfigCol>
                <ConfigTop>
                  <Combo $off $w={97} $h={14}>&nbsp;<Caret $c="#c9c9c9" /></Combo>
                  <Ic n="cfgSave" s={14} />
                </ConfigTop>
                <ConfigIcons>
                  {small(["cfgGrp", "cfgGrp", "cfgGrp", "cfgSave", "cfgCam", "cfgKey", "cfgBox"], 13)}
                </ConfigIcons>
              </ConfigCol>
            </GroupBody>
            <GroupLabel>Configurazioni</GroupLabel>
          </Group>

          <Group $w={111}>
            <GroupBody>
              <BigButton $w={38}>
                <BigIcon><Ic n="winOne" s={23} /></BigIcon>
                <BigText>Nuova<br />finestra</BigText>
              </BigButton>
              <BigButton $w={25}>
                <BigIcon><Ic n="winTwo" s={25} /></BigIcon>
                <BigText>Disponi<br />▾</BigText>
              </BigButton>
              <SubSep />
              <BigButton $w={41}>
                <BigIcon><Ic n="winSwap" s={25} /></BigIcon>
                <BigText>Cambia<br />finestra ▾</BigText>
              </BigButton>
            </GroupBody>
            <GroupLabel>Finestra</GroupLabel>
          </Group>
        </Ribbon>
      </Header>
      <HeaderEdge />

      <Main>
        <Rail>
          <RailTab>
            <Ic n="railC" s={9} />
            <RailText>Livelli</RailText>
          </RailTab>
          <RailIcons>
            <Ic n="railA" s={12} />
            <Ic n="railB" s={12} />
            <Ic n="railC" s={12} />
          </RailIcons>
        </Rail>
        <Viewport>
          <Model />
          <TreePanel>
            <TreeGrip />
            {TREE.map((r, i) => (
              <TreeRow key={i} $in={r.in}>
                {r.box && <Expander />}
                {r.check && <TreeCheck />}
                {r.blank && <TreeCheck $blank />}
                {r.picked ? (
                  <Highlight>{r.picked}</Highlight>
                ) : (
                  <>
                    <Ic n={r.icon} s={7} />
                    {r.icon2 && <Ic n={r.icon2} s={7} />}
                    {r.text}
                  </>
                )}
              </TreeRow>
            ))}
          </TreePanel>
        </Viewport>
      </Main>

      <PromptRow>
        <PromptGrip />
        <PromptName><Ic n="prompt" s={15} />PromptBar</PromptName>
        <PromptText>
          Fare clic sul comando 'Disegna' e creare uno schizzo chiuso di un piano (premere F3 per bloccare il piano), quindi fare clic sul comando 'Solidi' o selezionare una 'Regione' chiusa per creare una feature.
        </PromptText>
        <PromptTools>
          <BigA $s={13}>A</BigA>
          <BigA $s={10}>A</BigA>
          <Ic n="chevUp" s={9} />
          <Ic n="arrowDn" s={9} />
          <Ic n="pin" s={9} />
          <Ic n="closeD" s={8} />
        </PromptTools>
      </PromptRow>

      <StatusBar>
        <StatusText>0 oggetti sono selezionati</StatusText>
        <FindBox>Trova comando</FindBox>
        <StatusIcons>
          <Slot $w={16}><Ic n="jump" s={12} /></Slot>
          <Slot $w={18}><Ic n="zoomArea" s={12} /></Slot>
          <Slot $w={17}><Ic n="zoomS" s={12} /></Slot>
          <Slot $w={16}><Ic n="fit" s={12} /></Slot>
          <Slot $w={17}><Ic n="eye" s={12} /></Slot>
          <Slot $w={17}><Ic n="greenTurn" s={12} /></Slot>
          <Slot $w={16}><Ic n="moveS" s={12} /></Slot>
          <Slot $w={15}><Ic n="folderS" s={12} /></Slot>
          <Slot $w={18}><Ic n="squaresS" s={13} /></Slot>
          <Slot $w={13}><Ic n="minus" s={10} /></Slot>
          <ZoomSlider><ZoomThumb /></ZoomSlider>
          <Slot $w={12}><Ic n="plus" s={10} /></Slot>
          <Slot $w={18}><Ic n="record" s={12} /></Slot>
          <Slot $w={18}><Ic n="upGreen" s={13} /></Slot>
        </StatusIcons>
      </StatusBar>

      <Taskbar>
        <StartButton><Ic n="win" s={13} /></StartButton>
        <SearchBox><Ic n="search" s={14} />Scrivi qui per eseguire la ricerca</SearchBox>
        <TaskSlot $w={36}><Ic n="cortana" s={14} /></TaskSlot>
        <TaskSlot $w={36}><Ic n="taskview" s={14} /></TaskSlot>
        <TaskSlot $w={36} $ml={3} $active><Ic n="app" s={20} /></TaskSlot>
        <Tray>
          <Slot $w={18}><Ic n="up" s={12} /></Slot>
          <Slot $w={18}><Ic n="cloud" s={13} /></Slot>
          <Slot $w={18}><Ic n="net" s={14} /></Slot>
          <Slot $w={18}><Ic n="sound" s={13} /></Slot>
          <TrayText $w={26}>ITA</TrayText>
          <TrayText $w={54}>14:12<br />13/11/2020</TrayText>
          <Slot $w={30}><Ic n="notice" s={15} /></Slot>
        </Tray>
      </Taskbar>
    </Page>
  );
}
